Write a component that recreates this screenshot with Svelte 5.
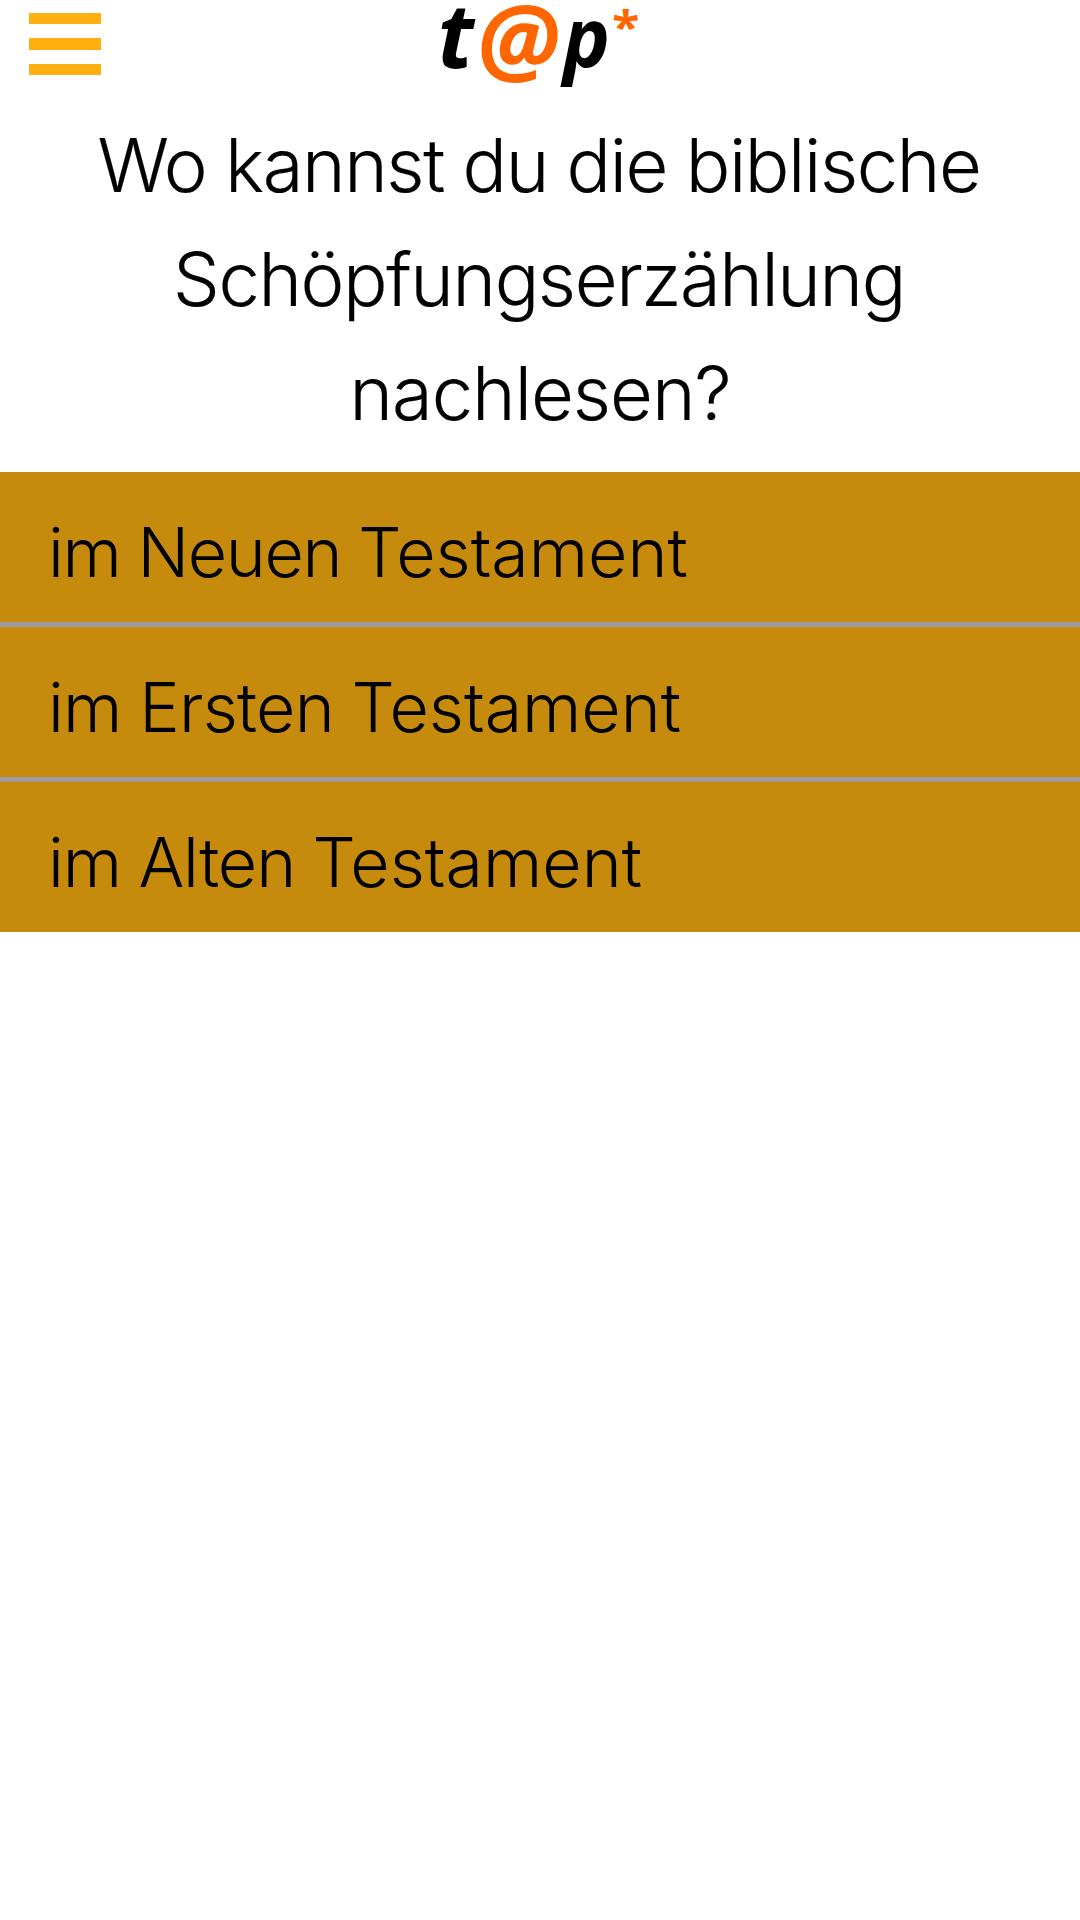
<script>
  const options = [
    { lead: 'im Neuen', tracking: -1.35 },
    { lead: 'im Ersten', tracking: -0.75 },
    { lead: 'im Alten', tracking: -1.05 },
  ];
</script>

<header>
  <button class="menu" aria-label="Menü">
    <span></span><span></span><span></span>
  </button>
  <svg class="logo" width="220" height="100" viewBox="430 0 220 100" role="img" aria-label="t@p*">
    <text transform="translate(437.5 68) scale(.885 .9)">t</text>
    <text class="accent" transform="translate(477.2 73.6) scale(.95 .965)">@</text>
    <text transform="translate(563 66.5) scale(.79 .82)">p</text>
    <text class="accent star" transform="translate(612.2 43) scale(.5 .45)">*</text>
  </svg>
</header>

<main>
  <h1>
    <span class="first">Wo kannst du die biblische</span>
    <span class="second">Schöpfungserzählung</span>
    <span class="third">nachlesen?</span>
  </h1>
  <ul>
    {#each options as option}
      <li><span style:letter-spacing="{option.tracking}px">{option.lead}&nbsp;</span>Testament</li>
    {/each}
  </ul>
</main>

<style>
  :global(body) {
    background: #fff;
    color: #000;
    font-family: Inter, 'Liberation Sans', sans-serif;
    font-weight: 300;
  }
  header {
    display: grid;
    grid-template-columns: 430px 220px 430px;
    height: 107.5px;
  }
  .menu {
    display: flex;
    flex-direction: column;
    align-items: flex-start;
    gap: 14px;
    padding: 13px 0 0 29px;
    border: 0;
    background: none;
  }
  .menu span {
    width: 72px;
    height: 11px;
    background: #ffb011;
  }
  .menu span:nth-child(2) {
    height: 12px;
  }
  .logo {
    overflow: visible;
  }
  .logo text {
    font: italic 700 100px 'Noto Sans', sans-serif;
  }
  .logo .accent {
    fill: #f60;
  }
  .logo .star {
    font-style: normal;
  }
  h1 {
    margin: 0 0 22.5px;
    font-size: 74px;
    font-weight: 300;
    line-height: 114px;
    text-align: center;
    white-space: nowrap;
    -webkit-text-stroke: 0.2px #000;
  }
  h1 span {
    display: block;
  }
  .first {
    letter-spacing: -1.35px;
    word-spacing: -0.9px;
    padding-right: 2px;
  }
  .second {
    letter-spacing: -1.4px;
    padding-right: 2px;
  }
  .third {
    letter-spacing: -1px;
  }
  ul {
    display: flex;
    flex-direction: column;
    gap: 5px;
    margin: 0;
    padding: 0;
    background: #9b9b9b;
    list-style: none;
  }
  li {
    box-sizing: border-box;
    height: 150px;
    padding: 10px 0 0 48px;
    background: #c68b0d;
    font-size: 68px;
    line-height: 141px;
    white-space: nowrap;
  }
  li span {
    word-spacing: -0.8px;
  }
</style>
